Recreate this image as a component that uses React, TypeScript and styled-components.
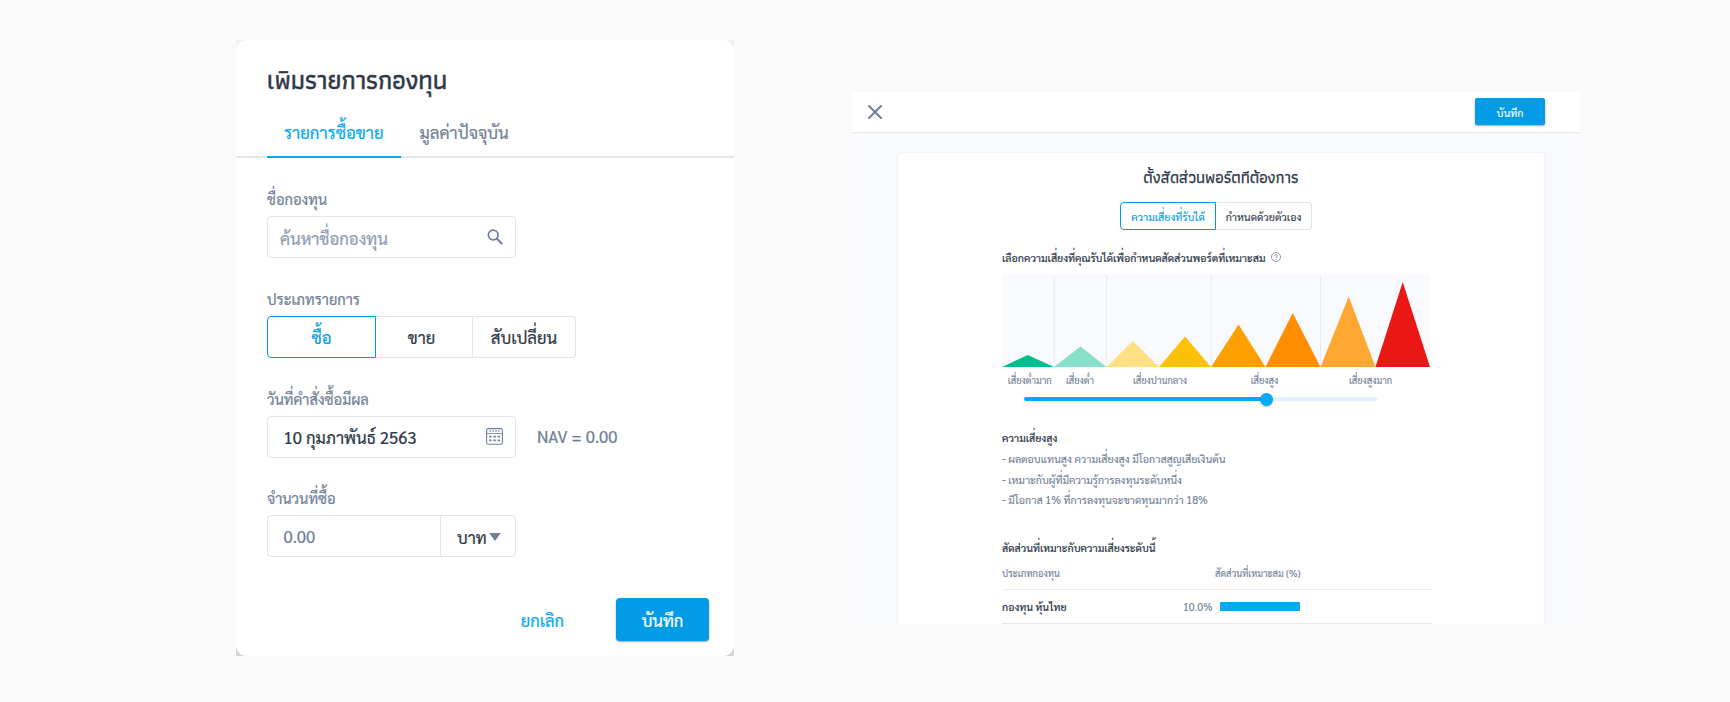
import React from 'react';
import styled, { createGlobalStyle, css } from 'styled-components';

const color = {
  ink: '#2d3748',
  grey: '#718096',
  pale: '#8e9bb3',
  line: '#e2e4ee',
  blue: '#03a9f4',
  deep: '#039be5',
};

const GlobalStyle = createGlobalStyle`
  * { box-sizing: border-box; }
  body { margin: 0; background: #fafafa; font-family: Sarabun, 'Noto Sans', sans-serif; color: ${color.ink}; }
  button { font: inherit; margin: 0; padding: 0; cursor: pointer; }
  svg { display: block; flex: none; }
`;

const Page = styled.main`
  display: flex;
  align-items: flex-start;
  gap: 118px;
  width: 1730px;
  height: 702px;
  padding: 40px 0 0 236px;
  overflow: hidden;
  white-space: nowrap;
`;

/* Fund transaction dialog */

const DialogBackdrop = styled.div`
  width: 498px;
  height: 616px;
  background: linear-gradient(#f3f3f3, #d6d6d6);
  -webkit-text-stroke: 0.2px;
`;

const Dialog = styled.section`
  display: flex;
  flex-direction: column;
  height: 100%;
  border-radius: 11px;
  background: #fff;
`;

const DialogTitle = styled.h1`
  margin: 0;
  padding: 20px 0 0 31px;
  height: 61px;
  font: 500 25.6px/41px Athiti, Kanit, sans-serif;
  -webkit-text-stroke: 0.5px;
`;

const Tabs = styled.div`
  display: flex;
  gap: 2px;
  height: 57px;
  padding-left: 31px;
  box-shadow: inset 0 -2px #e2e6ee;
`;

const Tab = styled.button<{ $active?: boolean }>`
  height: 57px;
  padding: 6px 17px 0;
  border: 0;
  border-bottom: 2px solid ${p => (p.$active ? color.blue : 'transparent')};
  background: none;
  color: ${p => (p.$active ? color.blue : color.grey)};
  font-size: 16.75px;
  line-height: 24px;
`;

const Fields = styled.div`
  display: flex;
  flex-direction: column;
  gap: 30.6px;
  padding: 31px 0 0 31px;
`;

const Field = styled.div`
  display: flex;
  flex-direction: column;
  align-items: flex-start;
  gap: 7px;
`;

const FieldLabel = styled.label`
  color: ${color.grey};
  font-size: 14.66px;
  line-height: 20px;
`;

const InputRow = styled.div`
  display: flex;
  align-items: center;
  gap: 21px;
`;

const InputBox = styled.div<{ $inset: number }>`
  display: flex;
  align-items: center;
  justify-content: space-between;
  width: 249px;
  height: 42px;
  padding: 0 12px 0 ${p => p.$inset}px;
  border: 1px solid ${color.line};
  border-radius: 4px;
  font-size: 16.68px;
`;

const Placeholder = styled.span`
  padding-top: 2px;
  color: ${color.pale};
`;

const Value = styled.span<{ $muted?: boolean }>`
  color: ${p => (p.$muted ? color.grey : color.ink)};
`;

const NavText = styled.span`
  color: ${color.grey};
  font-size: 16.68px;
  padding-bottom: 1px;
`;

const Unit = styled.button`
  display: flex;
  align-items: center;
  gap: 2px;
  width: 75px;
  height: 40px;
  padding: 1px 0 0 16px;
  margin-right: -12px;
  border: 0;
  border-left: 1px solid ${color.line};
  background: none;
  color: ${color.ink};
`;

const Segments = styled.div`
  display: flex;
`;

const activeSegment = css`
  border-color: ${color.deep};
  color: ${color.deep};
`;

const Segment = styled.button<{ $width: number; $small?: boolean; $active?: boolean }>`
  width: ${p => p.$width}px;
  height: ${p => (p.$small ? 28 : 42.5)}px;
  padding-top: 1px;
  border: 1px solid ${color.line};
  background: #fff;
  color: ${color.ink};
  font-size: ${p => (p.$small ? 10.7 : 16.68)}px;
  &:first-child { border-radius: 4px 0 0 4px; }
  &:last-child { border-radius: 0 4px 4px 0; }
  & + & { border-left-width: 0; }
  &:nth-child(2):not(:last-child) { padding-right: 5px; }
  &:nth-child(3) { border-left-width: 1px; }
  ${p => p.$active && activeSegment}
`;

const Actions = styled.div`
  display: flex;
  justify-content: flex-end;
  align-items: center;
  gap: 52px;
  padding: 41px 25px 0 0;
`;

const CancelButton = styled.button`
  border: 0;
  background: none;
  color: ${color.blue};
  font-size: 16.5px;
`;

const SaveButton = styled.button<{ $small?: boolean }>`
  width: ${p => (p.$small ? 70 : 93)}px;
  height: ${p => (p.$small ? 27 : 42.5)}px;
  border: 0;
  border-radius: ${p => (p.$small ? 2 : 4)}px;
  background: ${color.deep};
  box-shadow: 0 1px 2px rgba(0, 40, 70, 0.4);
  color: #fff;
  font-size: ${p => (p.$small ? 10.7 : 16.6)}px;
  padding-top: ${p => (p.$small ? 1 : 0)}px;
`;

/* Portfolio allocation screen */

const Screen = styled.section`
  display: flex;
  flex-direction: column;
  width: 728px;
  height: 532px;
  margin-top: 52px;
  overflow: hidden;
  background: #f9fafe;
  -webkit-text-stroke: 0.1px;
`;

const ScreenHeader = styled.header`
  display: flex;
  align-items: flex-start;
  justify-content: space-between;
  flex: none;
  height: 41px;
  padding: 6px 35px 0 16px;
  border-bottom: 1px solid #e9ebf1;
  background: #fff;
`;

const CloseButton = styled.button`
  padding-top: 7px;
  border: 0;
  background: none;
`;

const Card = styled.div`
  flex: 1;
  margin: 20px 36px 0 46px;
  padding: 10px 114px 0 104px;
  border-radius: 4px 4px 0 0;
  background: #fff;
  box-shadow: 0 0 2px rgba(60, 80, 130, 0.12);
`;

const CardTop = styled.div`
  display: flex;
  flex-direction: column;
  align-items: center;
  gap: 9px;
  padding-bottom: 17px;
`;

const CardTitle = styled.h2`
  margin: 0;
  padding-left: 10px;
  height: 30px;
  font: 500 16.1px/29px Athiti, Kanit, sans-serif;
  -webkit-text-stroke: 0.25px;
`;

const Prompt = styled.div`
  display: flex;
  align-items: center;
  gap: 5px;
  height: 20px;
  font-size: 10.7px;
  -webkit-text-stroke: 0.2px;
`;

const ChartFrame = styled.div`
  height: 92px;
  margin-top: 8px;
`;

const AxisLabels = styled.div`
  display: grid;
  grid-template-columns: 55.5px 45px 115px 94px 118px;
  height: 24px;
  color: ${color.grey};
  font-size: 9.36px;
  line-height: 26px;
  text-align: center;
`;

const Slider = styled.div`
  display: flex;
  align-items: center;
  width: 354px;
  height: 14px;
  margin: 1px 0 0 22px;
`;

const Track = styled.div<{ $filled?: boolean }>`
  width: ${p => (p.$filled ? 237 : 106)}px;
  height: 4px;
  border-radius: ${p => (p.$filled ? '2px 0 0 2px' : '0 2px 2px 0')};
  background: ${p => (p.$filled ? color.blue : '#e1f4fe')};
`;

const Knob = styled.div`
  width: 13px;
  height: 13px;
  margin: 0 -1px;
  border-radius: 50%;
  background: ${color.blue};
  box-shadow: 0 1px 2px rgba(0, 60, 110, 0.3);
  z-index: 1;
`;

const SectionTitle = styled.h3<{ $top: number }>`
  margin: ${p => p.$top}px 0 0;
  font-size: 10.57px;
  font-weight: 500;
  line-height: 20px;
`;

const Notes = styled.ul`
  margin: 1px 0 0;
  padding: 0;
  list-style: none;
  color: ${color.grey};
  font-size: 10.7px;
  line-height: 20.6px;
`;

const TableHead = styled.div`
  display: grid;
  grid-template-columns: 213px 1fr;
  width: 430px;
  height: 27px;
  margin-top: 5px;
  border-bottom: 1px solid #eceef2;
  color: ${color.grey};
  font-size: 9.4px;
  line-height: 20px;
`;

const TableRow = styled.div`
  display: grid;
  grid-template-columns: 181px 37px 80px;
  align-items: center;
  width: 430px;
  height: 34px;
  border-bottom: 1px solid #e6e8ec;
  font-size: 10.57px;
  font-weight: 500;
`;

const FundName = styled.span`
  padding-top: 1px;
`;

const Percent = styled.span`
  padding-top: 1px;
  color: ${color.grey};
  font-weight: 400;
`;

const ShareBar = styled.div`
  height: 8.5px;
  border-radius: 1px;
  background: ${color.blue};
`;

const SearchIcon = () => (
  <svg width="16" height="16" viewBox="0 0 16 16" fill="none" stroke={color.grey} strokeWidth="1.8">
    <circle cx="6.2" cy="6" r="4.8" />
    <path d="M9.7 9.5 15.2 15" strokeWidth="2" />
  </svg>
);

const CalendarIcon = () => (
  <svg width="17" height="17" viewBox="0 0 17 17" fill="none" stroke={color.grey}>
    <rect x="0.6" y="0.6" width="15.8" height="15.6" rx="1.8" strokeWidth="1.1" />
    <path d="M1 5.6h15" strokeWidth="0.9" />
    <path d="M4.2 2v2M7.1 2v2M10 2v2M12.9 2v2" strokeWidth="1" />
    <path d="M3.2 8.6h2.4m1.8 0h2.4m1.8 0H14M3.2 12.4h2.4m1.8 0h2.4m1.8 0H14" strokeWidth="1.7" />
  </svg>
);

const CaretIcon = () => (
  <svg width="12" height="8" viewBox="0 0 12 8">
    <path d="M.2.1h11.6L6 7.9Z" fill={color.grey} />
  </svg>
);

const CloseIcon = () => (
  <svg width="14" height="14" viewBox="0 0 14 14" stroke={color.grey} strokeWidth="2" strokeLinecap="round">
    <path d="m1 1 12 12M13 1 1 13" />
  </svg>
);

const HelpIcon = () => (
  <svg width="10" height="10" viewBox="0 0 10 10" fill="none" stroke={color.grey} strokeWidth="0.8">
    <circle cx="5" cy="5" r="4.5" />
    <path d="M3.6 4c0-1.9 2.8-1.9 2.8-.1C6.4 5 5 5 5 6.1M5 6.9v.8" />
  </svg>
);

const peaks = [
  { from: 0, to: 52, x: 25.7, top: 80, fill: '#00bf8f' },
  { from: 52, to: 104.5, x: 78.5, top: 71.5, fill: '#86e0ca' },
  { from: 104.5, to: 157, x: 130.7, top: 66, fill: '#ffe082' },
  { from: 157, to: 209, x: 183, top: 61.5, fill: '#ffc107' },
  { from: 209, to: 263.5, x: 236.5, top: 49.5, fill: '#ffa000' },
  { from: 263.5, to: 318.5, x: 290.7, top: 38, fill: '#ff8f00' },
  { from: 318.5, to: 373.5, x: 346.7, top: 21.5, fill: '#ffa733' },
  { from: 373.5, to: 428, x: 400.7, top: 7, fill: '#ea1815' },
];

const RiskChart = () => (
  <svg width="428" height="92" viewBox="0 0 428 92">
    <rect width="428" height="92" fill="#f9fafe" />
    <path d="M52.3 0v92M104.5 0v92M209.2 0v92M318.5 0v92" stroke="#e8eaf0" />
    {peaks.map(p => (
      <path key={p.from} d={`M${p.from} 92 L${p.x} ${p.top} L${p.to} 92Z`} fill={p.fill} />
    ))}
  </svg>
);

const TransactionDialog = () => (
  <DialogBackdrop>
    <Dialog>
      <DialogTitle>เพิมรายการกองทุน</DialogTitle>
      <Tabs>
        <Tab $active>รายการซื้อขาย</Tab>
        <Tab>มูลค่าปัจจุบัน</Tab>
      </Tabs>
      <Fields>
        <Field>
          <FieldLabel>ชื่อกองทุน</FieldLabel>
          <InputBox $inset={12}>
            <Placeholder>ค้นหาชื่อกองทุน</Placeholder>
            <SearchIcon />
          </InputBox>
        </Field>
        <Field>
          <FieldLabel>ประเภทรายการ</FieldLabel>
          <Segments>
            <Segment $width={109} $active>ซื้อ</Segment>
            <Segment $width={97}>ขาย</Segment>
            <Segment $width={103}>สับเปลี่ยน</Segment>
          </Segments>
        </Field>
        <Field>
          <FieldLabel>วันที่คำสั่งซื้อมีผล</FieldLabel>
          <InputRow>
            <InputBox $inset={15.5}>
              <Value>10 กุมภาพันธ์ 2563</Value>
              <CalendarIcon />
            </InputBox>
            <NavText>NAV = 0.00</NavText>
          </InputRow>
        </Field>
        <Field>
          <FieldLabel>จำนวนที่ซื้อ</FieldLabel>
          <InputBox $inset={15.5}>
            <Value $muted>0.00</Value>
            <Unit>บาท<CaretIcon /></Unit>
          </InputBox>
        </Field>
      </Fields>
      <Actions>
        <CancelButton>ยกเลิก</CancelButton>
        <SaveButton>บันทึก</SaveButton>
      </Actions>
    </Dialog>
  </DialogBackdrop>
);

const AllocationScreen = () => (
  <Screen>
    <ScreenHeader>
      <CloseButton aria-label="ปิด"><CloseIcon /></CloseButton>
      <SaveButton $small>บันทึก</SaveButton>
    </ScreenHeader>
    <Card>
      <CardTop>
        <CardTitle>ตั้งสัดส่วนพอร์ตทีต้องการ</CardTitle>
        <Segments>
          <Segment $small $width={96} $active>ความเสี่ยงที่รับได้</Segment>
          <Segment $small $width={96}>กำหนดด้วยตัวเอง</Segment>
        </Segments>
      </CardTop>
      <Prompt>
        เลือกความเสี่ยงที่คุณรับได้เพื่อกำหนดสัดส่วนพอร์ตที่เหมาะสม
        <HelpIcon />
      </Prompt>
      <ChartFrame><RiskChart /></ChartFrame>
      <AxisLabels>
        <span>เสี่ยงต่ำมาก</span>
        <span>เสี่ยงต่ำ</span>
        <span>เสี่ยงปานกลาง</span>
        <span>เสี่ยงสูง</span>
        <span>เสี่ยงสูงมาก</span>
      </AxisLabels>
      <Slider>
        <Track $filled />
        <Knob />
        <Track />
      </Slider>
      <SectionTitle $top={22}>ความเสี่ยงสูง</SectionTitle>
      <Notes>
        <li>- ผลตอบแทนสูง ความเสี่ยงสูง มีโอกาสสูญเสียเงินต้น</li>
        <li>- เหมาะกับผู้ที่มีความรู้การลงทุนระดับหนึ่ง</li>
        <li>- มีโอกาส 1% ที่การลงทุนจะขาดทุนมากว่า 18%</li>
      </Notes>
      <SectionTitle $top={27}>สัดส่วนที่เหมาะกับความเสี่ยงระดับนี้</SectionTitle>
      <TableHead>
        <span>ประเภทกองทุน</span>
        <span>สัดส่วนที่เหมาะสม (%)</span>
      </TableHead>
      <TableRow>
        <FundName>กองทุน หุ้นไทย</FundName>
        <Percent>10.0%</Percent>
        <ShareBar />
      </TableRow>
    </Card>
  </Screen>
);

export default function App() {
  return (
    <>
      <GlobalStyle />
      <Page>
        <TransactionDialog />
        <AllocationScreen />
      </Page>
    </>
  );
}
